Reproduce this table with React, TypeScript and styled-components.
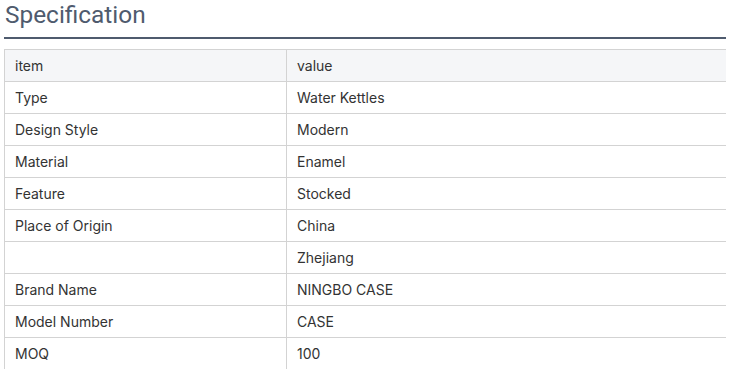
import React from 'react'
import styled, { createGlobalStyle } from 'styled-components'

const GlobalStyle = createGlobalStyle`
  body {
    margin: 0;
    background: #fff;
    font-family: Inter, 'Liberation Sans', sans-serif;
  }
`

const Section = styled.section`
  padding: 0 5px 0 4px;
  width: 722px;
`

const Heading = styled.h2`
  border-bottom: 2px solid #4f5b6e;
  color: #4f5b6e;
  font-family: Roboto, 'Liberation Sans', sans-serif;
  font-size: 24.4px;
  font-weight: 400;
  line-height: 30px;
  margin: 0 0 10px 0;
  padding: 0 0 7px 1px;
`

const Table = styled.table`
  border-collapse: collapse;
  width: 100%;
  table-layout: fixed;
`

const Cell = styled.td<{ $head?: boolean }>`
  background: ${(p) => (p.$head ? '#f5f6f8' : '#fff')};
  border: 1px solid #d3d3d3;
  color: #333;
  font-size: 14px;
  height: 32px;
  padding: 0 10px;
  box-sizing: border-box;

  &:first-child {
    width: 282px;
  }

  &:last-child {
    border-right: none;
  }
`

const rows: [string, string][] = [
  ['Type', 'Water Kettles'],
  ['Design Style', 'Modern'],
  ['Material', 'Enamel'],
  ['Feature', 'Stocked'],
  ['Place of Origin', 'China'],
  ['', 'Zhejiang'],
  ['Brand Name', 'NINGBO CASE'],
  ['Model Number', 'CASE'],
  ['MOQ', '100'],
]

export default function App() {
  return (
    <>
      <GlobalStyle />
      <Section>
        <Heading>Specification</Heading>
        <Table>
          <tbody>
            <tr>
              <Cell $head>item</Cell>
              <Cell $head>value</Cell>
            </tr>
            {rows.map(([item, value], i) => (
              <tr key={i}>
                <Cell>{item}</Cell>
                <Cell>{value}</Cell>
              </tr>
            ))}
          </tbody>
        </Table>
      </Section>
    </>
  )
}
